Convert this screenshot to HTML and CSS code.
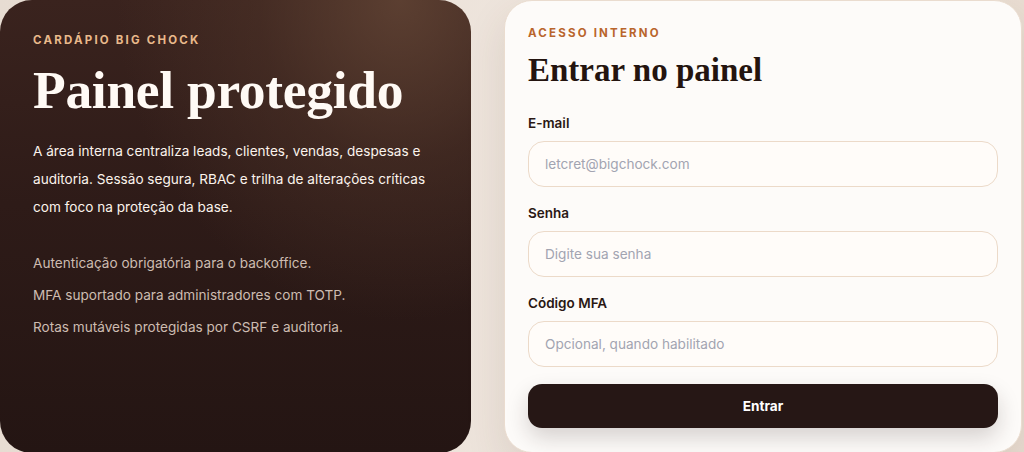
FILE: index.html
```html
<!DOCTYPE html>
<html lang="pt-BR">
<head>
<meta charset="utf-8">
<title>Painel protegido</title>
<link rel="stylesheet" href="styles.css">
</head>
<body>
<main class="layout">
  <section class="hero">
    <p class="hero-eyebrow">Cardápio Big Chock</p>
    <h1 class="hero-title">Painel protegido</h1>
    <p class="hero-text">A área interna centraliza leads, clientes, vendas, despesas e auditoria. Sessão segura, RBAC e trilha de alterações críticas com foco na proteção da base.</p>
    <ul class="hero-list">
      <li>Autenticação obrigatória para o backoffice.</li>
      <li>MFA suportado para administradores com TOTP.</li>
      <li>Rotas mutáveis protegidas por CSRF e auditoria.</li>
    </ul>
  </section>
  <section class="login">
    <p class="login-eyebrow">Acesso interno</p>
    <h2 class="login-title">Entrar no painel</h2>
    <form class="form">
      <label class="field">
        <span class="field-label">E-mail</span>
        <input class="field-input" type="email" placeholder="letcret@bigchock.com">
      </label>
      <label class="field">
        <span class="field-label">Senha</span>
        <input class="field-input" type="password" placeholder="Digite sua senha">
      </label>
      <label class="field">
        <span class="field-label">Código MFA</span>
        <input class="field-input" type="text" placeholder="Opcional, quando habilitado">
      </label>
      <button class="submit" type="button">Entrar</button>
    </form>
  </section>
</main>
</body>
</html>
```

FILE: styles.css
```css
* { box-sizing: border-box; }
html, body { margin: 0; padding: 0; }
body {
  width: 1024px;
  height: 452px;
  overflow: hidden;
  font-family: Inter, "Noto Sans", sans-serif;
  background: linear-gradient(90deg, #e7dcd2 0%, #efe6de 60%, #e9ddd2 100%);
}
.layout {
  display: grid;
  grid-template-columns: 471px 518px;
  column-gap: 33px;
  height: 451px;
}
.hero {
  border-radius: 32px;
  padding: 32px 33px;
  color: #fff;
  background:
    radial-gradient(ellipse at 85% 0%, rgba(100, 70, 54, 0.8) 0%, rgba(85, 57, 44, 0.4) 25%, rgba(60, 36, 28, 0) 50%),
    linear-gradient(180deg, #3a231e 0%, #2e1b18 45%, #241513 100%);
}
.hero-eyebrow {
  margin: 0;
  font-size: 11.5px;
  line-height: 16px;
  font-weight: 700;
  letter-spacing: 2.2px;
  text-transform: uppercase;
  color: #e9b98b;
}
.hero-title {
  margin: 13px 0 0;
  font-family: "Liberation Serif", "DejaVu Serif", serif;
  font-weight: 700;
  font-size: 53.5px;
  line-height: 58px;
  letter-spacing: -0.3px;
  color: #fffaf5;
}
.hero-text {
  margin: 18px 0 0;
  font-size: 13.6px;
  line-height: 28px;
  color: #fbf3ec;
}
.hero-list {
  list-style: none;
  margin: 31px 0 0;
  padding: 0;
  display: flex;
  flex-direction: column;
  gap: 10px;
  font-size: 13.6px;
  line-height: 22px;
  color: #cdbcb1;
}
.login {
  border-radius: 28px;
  padding: 24px 23px;
  background: #fdfbf9;
  border: 1px solid #eadccf;
  box-shadow: 0 16px 40px rgba(90, 60, 40, 0.12);
}
.login-eyebrow {
  margin: 0;
  font-size: 11.5px;
  line-height: 16px;
  font-weight: 700;
  letter-spacing: 2.2px;
  text-transform: uppercase;
  color: #b9652c;
}
.login-title {
  margin: 10px 0 0;
  font-family: "Liberation Serif", "DejaVu Serif", serif;
  font-weight: 700;
  font-size: 33px;
  line-height: 38px;
  color: #24140f;
}
.form {
  margin-top: 25px;
  display: flex;
  flex-direction: column;
  gap: 17px;
}
.field {
  display: flex;
  flex-direction: column;
  gap: 9px;
}
.field-label {
  font-size: 13.5px;
  line-height: 18px;
  font-weight: 600;
  color: #2a1814;
}
.field-input {
  height: 46px;
  border-radius: 16px;
  border: 1px solid #ecdac9;
  background: #fffcf9;
  padding: 0 16px;
  font-family: inherit;
  font-size: 13.6px;
  color: #2a1814;
  outline: none;
}
.field-input::placeholder { color: #a2a4b1; }
.submit {
  height: 44px;
  border: 0;
  border-radius: 14px;
  background: #261715;
  color: #fff;
  font-family: inherit;
  font-size: 13.6px;
  font-weight: 700;
  box-shadow: 0 10px 22px rgba(38, 23, 21, 0.18);
}
```
